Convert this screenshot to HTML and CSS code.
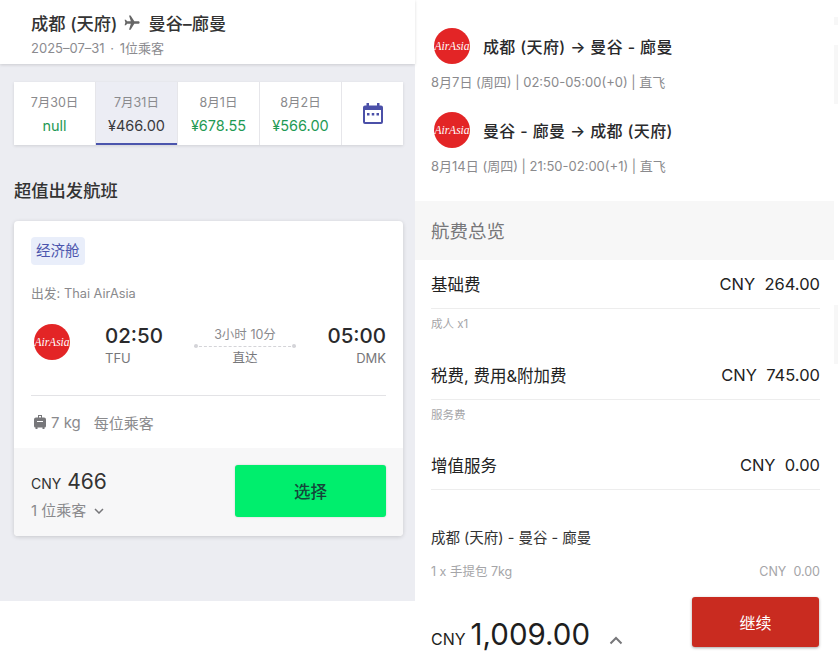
FILE: index.html
```html
<!DOCTYPE html>
<html lang="zh">
<head>
<meta charset="utf-8">
<title>航班</title>
<link rel="stylesheet" href="styles.css">
</head>
<body>
<div class="page">
  <section class="left">
    <header class="head">
      <div class="route">成都 (天府)
        <svg class="plane" viewBox="0 0 24 24"><path d="M21 12c0-1-.8-1.6-1.8-1.6H14.3L9.6 3H7.6l2.3 7.4H5.2L3.7 8.5H2l1 3.500-1 3.500h1.700l1.500-1.900h4.700L7.600 21h2l4.700-7.400h4.900c1 0 1.800-.6 1.800-1.600z"/></svg>
        曼谷–廊曼</div>
      <div class="head-sub">2025–07–31 · 1位乘客</div>
    </header>
    <main class="main">
      <nav class="tabs">
        <div class="tab"><span class="tab-date">7月30日</span><span class="tab-price">null</span></div>
        <div class="tab tab-on"><span class="tab-date">7月31日</span><span class="tab-price">¥466.00</span></div>
        <div class="tab"><span class="tab-date">8月1日</span><span class="tab-price">¥678.55</span></div>
        <div class="tab"><span class="tab-date">8月2日</span><span class="tab-price">¥566.00</span></div>
        <div class="tab tab-cal">
          <svg class="cal" viewBox="0 0 20 24"><path d="M3.500 1h2.500v2.500h8V1h2.500v2.500H18a2 2 0 0 1 2 2V20a2 2 0 0 1-2 2H2a2 2 0 0 1-2-2V5.500a2 2 0 0 1 2-2h1.500z"/><rect class="cal-in" x="2" y="8" width="16" height="12"/><rect x="4" y="11" width="2.500" height="2.500"/><rect x="8.750" y="11" width="2.500" height="2.500"/><rect x="13.500" y="11" width="2.500" height="2.500"/></svg>
        </div>
      </nav>
      <h2 class="best">超值出发航班</h2>
      <article class="card">
        <div class="card-body">
          <span class="badge">经济舱</span>
          <div class="carrier">出发: Thai AirAsia</div>
          <div class="trip">
            <svg class="logo logo-lg" viewBox="0 0 40 40"><circle cx="20" cy="20" r="18" fill="#e32526"/><text class="logo-text" x="20" y="24" text-anchor="middle">AirAsia</text></svg>
            <div class="stop">
              <span class="time">02:50</span>
              <span class="code">TFU</span>
            </div>
            <div class="mid">
              <span class="dur">3小时 10分</span>
              <span class="dots"></span>
              <span class="direct">直达</span>
            </div>
            <div class="stop stop-end">
              <span class="time">05:00</span>
              <span class="code">DMK</span>
            </div>
          </div>
          <div class="bag">
            <svg class="bag-ico" viewBox="0 0 12 14"><path d="M4 0h4v2.500h2a2 2 0 0 1 2 2V11a1.500 1.500 0 0 1-1.500 1.500V14h-2v-1.500h-5V14h-2v-1.500A1.500 1.500 0 0 1 0 11V4.500a2 2 0 0 1 2-2h2zM5 1v1.500h2V1zM3 6v1h6V6z"/></svg>
            <span class="bag-kg">7 kg</span><span>每位乘客</span>
          </div>
        </div>
        <div class="card-foot">
          <div>
            <div class="price"><span class="price-cur">CNY</span> 466</div>
            <div class="pax">1 位乘客
              <svg class="chev" viewBox="0 0 10 6"><path d="M1 1l4 4 4-4"/></svg>
            </div>
          </div>
          <button class="pick">选择</button>
        </div>
      </article>
    </main>
  </section>

  <section class="right">
    <div class="flights">
      <div class="flight">
        <div class="flight-top">
          <svg class="logo" viewBox="0 0 40 40"><circle cx="20" cy="20" r="18" fill="#e32526"/><text class="logo-text" x="20" y="24" text-anchor="middle">AirAsia</text></svg>
          <span class="flight-name">成都 (天府) → 曼谷 - 廊曼</span>
        </div>
        <div class="flight-sub">8月7日 (周四) | 02:50-05:00(+0) | 直飞</div>
      </div>
      <div class="flight">
        <div class="flight-top">
          <svg class="logo" viewBox="0 0 40 40"><circle cx="20" cy="20" r="18" fill="#e32526"/><text class="logo-text" x="20" y="24" text-anchor="middle">AirAsia</text></svg>
          <span class="flight-name">曼谷 - 廊曼 → 成都 (天府)</span>
        </div>
        <div class="flight-sub">8月14日 (周四) | 21:50-02:00(+1) | 直飞</div>
      </div>
    </div>
    <div class="fare-head">航费总览</div>
    <div class="fares">
      <div class="fare-row"><span>基础费</span><span class="amt">CNY&nbsp; 264.00</span></div>
      <div class="fare-note">成人 x1</div>
      <div class="fare-row"><span>税费, 费用&amp;附加费</span><span class="amt">CNY&nbsp; 745.00</span></div>
      <div class="fare-note">服务费</div>
      <div class="fare-row"><span>增值服务</span><span class="amt">CNY&nbsp; 0.00</span></div>
      <div class="extra-title">成都 (天府) - 曼谷 - 廊曼</div>
      <div class="extra-row"><span>1 x 手提包 7kg</span><span>CNY&nbsp; 0.00</span></div>
    </div>
    <footer class="total">
      <div class="total-price"><span class="total-cur">CNY</span> 1,009.00
        <svg class="chev-up" viewBox="0 0 14 9"><path d="M1.500 7.500L7 2l5.500 5.500"/></svg>
      </div>
      <button class="go">继续</button>
    </footer>
  </section>
  <aside class="strip"><span class="mark mark-a"></span><span class="mark mark-b"></span><span class="mark mark-c"></span></aside>
</div>
</body>
</html>
```

FILE: styles.css
```css
* { box-sizing: border-box; }
html, body { margin: 0; padding: 0; background: #fff; }
body { font-family: Inter, "Noto Sans CJK SC", sans-serif; color: #2b2b2e; }
.page { display: flex; width: 838px; height: 655px; overflow: hidden; }

.left { width: 415px; flex: none; }
.head { position: relative; z-index: 1; height: 64px; padding: 10px 31px 0; background: #fff; box-shadow: 0 1px 3px rgba(0,0,0,.14); }
.route { display: flex; align-items: center; gap: 6px; height: 24px; font-size: 17.300px; font-weight: 500; color: #333; }
.plane { width: 19px; height: 19px; fill: #666; }
.head-sub { margin-top: 5px; font-size: 13px; line-height: 18px; word-spacing: 2px; color: #8b8b8f; }

.main { height: 537px; padding: 18px 12px 0 14px; background: #ecedf2; }
.tabs { display: flex; gap: 1px; height: 63px; background: #e6e6ea; box-shadow: 0 1px 3px rgba(0,0,0,.12); }
.tab { flex: 0 0 81px; display: flex; flex-direction: column; align-items: center; padding-top: 12px; background: #fff; }
.tab-date { font-size: 12.500px; line-height: 18px; color: #8a8a8d; }
.tab-price { margin-top: 4px; font-size: 14.500px; line-height: 20px; color: #1f9a55; }
.tab-on { background: #ecedf4; border-bottom: 2px solid #4b55ad; }
.tab-on .tab-price { color: #3a3a3d; }
.tab-cal { flex: 1; padding-top: 20px; }
.cal { width: 20px; height: 24px; fill: #4b50a8; }
.cal-in { fill: #fff; }

.best { margin: 35px 0 19px; font-size: 17.300px; line-height: 22px; font-weight: 500; color: #333; }

.card { height: 315px; border-radius: 4px; overflow: hidden; background: #fff; box-shadow: 0 1px 4px rgba(0,0,0,.16); }
.card-body { height: 227px; padding: 16px 17px 0; }
.badge { display: inline-block; height: 28px; padding: 0 5px; border-radius: 4px; font-size: 14.500px; line-height: 27px; color: #4b55ad; background: #e9eefa; }
.carrier { margin-top: 20px; font-size: 12.800px; line-height: 18px; color: #8a8a8d; }
.trip { display: flex; align-items: flex-start; height: 74px; margin-top: 19px; border-bottom: 1px solid #e3e3e6; }
.logo { width: 40px; height: 40px; flex: none; }
.logo-lg { margin-left: 1px; margin-right: 33px; }
.logo-text { font-family: "Liberation Serif", serif; font-style: italic; font-weight: 400; font-size: 11.500px; fill: #fff; }
.stop { display: flex; flex-direction: column; width: 58px; }
.stop-end { align-items: flex-end; margin-left: auto; }
.time { font-size: 20.500px; line-height: 27px; font-weight: 500; color: #2a2a2c; white-space: nowrap; }
.code { font-size: 13px; line-height: 18px; color: #77777a; }
.mid { display: flex; flex-direction: column; align-items: center; width: 106px; margin-left: 29px; }
.dur { margin-top: 4px; font-size: 12.500px; line-height: 17px; color: #8a8a8d; }
.dots { width: 102px; margin-top: 3px; border-top: 1px dashed #d4d4d8; position: relative; }
.dots::before, .dots::after { content: ""; position: absolute; top: -3px; width: 4px; height: 4px; border-radius: 50%; background: #d4d4d8; }
.dots::before { left: 0; }
.dots::after { right: 0; }
.direct { margin-top: 2px; font-size: 12.500px; line-height: 18px; color: #77777a; }
.bag { display: flex; align-items: center; height: 54px; padding-bottom: 2px; font-size: 15px; color: #8a8a8d; }
.bag-ico { width: 12px; height: 14px; margin: 0 5px 0 3px; fill: #77777a; }
.bag-kg { margin-right: 13px; }

.card-foot { display: flex; justify-content: space-between; align-items: flex-start; height: 88px; padding: 17px 17px 0; background: #f7f7f8; }
.price { font-size: 21px; line-height: 26px; color: #333; margin-top: 4px; }
.price-cur { font-size: 14px; }
.pax { display: flex; align-items: center; gap: 6px; margin-top: 4px; font-size: 15px; line-height: 20px; color: #8a8a8d; }
.chev { width: 10px; height: 6px; margin-left: 2px; fill: none; stroke: #77777a; stroke-width: 1.500; }
.pick { width: 151px; height: 52px; border: 0; border-radius: 3px; font-family: inherit; font-size: 16.500px; font-weight: 500; color: #14463a; background: #00ee6d; box-shadow: 0 0 2px rgba(0,0,0,.18); }

.right { display: flex; flex-direction: column; width: 419px; flex: none; }
.flights { height: 201px; padding: 28px 15px 0 16px; }
.flight { height: 84px; }
.flight-top { display: flex; align-items: center; gap: 13px; height: 36px; margin-left: 1px; }
.flight-top .logo { width: 40px; height: 40px; margin-right: -2px; }
.flight-name { font-size: 16px; font-weight: 500; letter-spacing: .35px; color: #2a2a2c; }
.flight-sub { margin-top: 9px; font-size: 13px; line-height: 18px; color: #8a8a8d; }
.fare-head { height: 59px; padding: 0 16px; font-size: 18.500px; line-height: 60px; color: #77777a; background: #f7f7f7; }
.fares { height: 337px; padding: 0 14px 0 16px; }
.fare-row { display: flex; justify-content: space-between; align-items: center; height: 49px; border-bottom: 1px solid #ededed; font-size: 16.500px; color: #222; }
.amt { font-size: 16.500px; }
.fare-note { height: 41.500px; padding-top: 6px; font-size: 11.500px; line-height: 18px; color: #a5a5a8; }
.extra-title { margin-top: 36px; font-size: 14.500px; line-height: 24px; color: #333; }
.extra-row { display: flex; justify-content: space-between; margin-top: 13px; font-size: 12.500px; line-height: 18px; color: #a5a5a8; }
.total { display: flex; justify-content: space-between; height: 58px; padding: 0 15px 0 16px; }
.total-price { display: flex; align-items: baseline; height: 56px; padding-top: 18px; font-size: 29.500px; line-height: 38px; color: #1e1e20; }
.total-cur { margin-right: 5px; font-size: 16px; }
.chev-up { width: 14px; height: 9px; margin-left: 19px; fill: none; stroke: #77777a; stroke-width: 2; }
.go { width: 127px; height: 50px; border: 0; border-radius: 3px; font-family: inherit; font-size: 16px; color: #fff; background: #c92b20; box-shadow: 0 1px 3px rgba(0,0,0,.35); }

.strip { display: flex; flex-direction: column; width: 4px; flex: none; }
.mark { display: block; background: #f7f7f7; }
.mark-a { height: 8px; margin-top: 17px; }
.mark-b { height: 59px; margin-top: 20px; }
.mark-c { height: 59px; margin-top: 201px; }
```
